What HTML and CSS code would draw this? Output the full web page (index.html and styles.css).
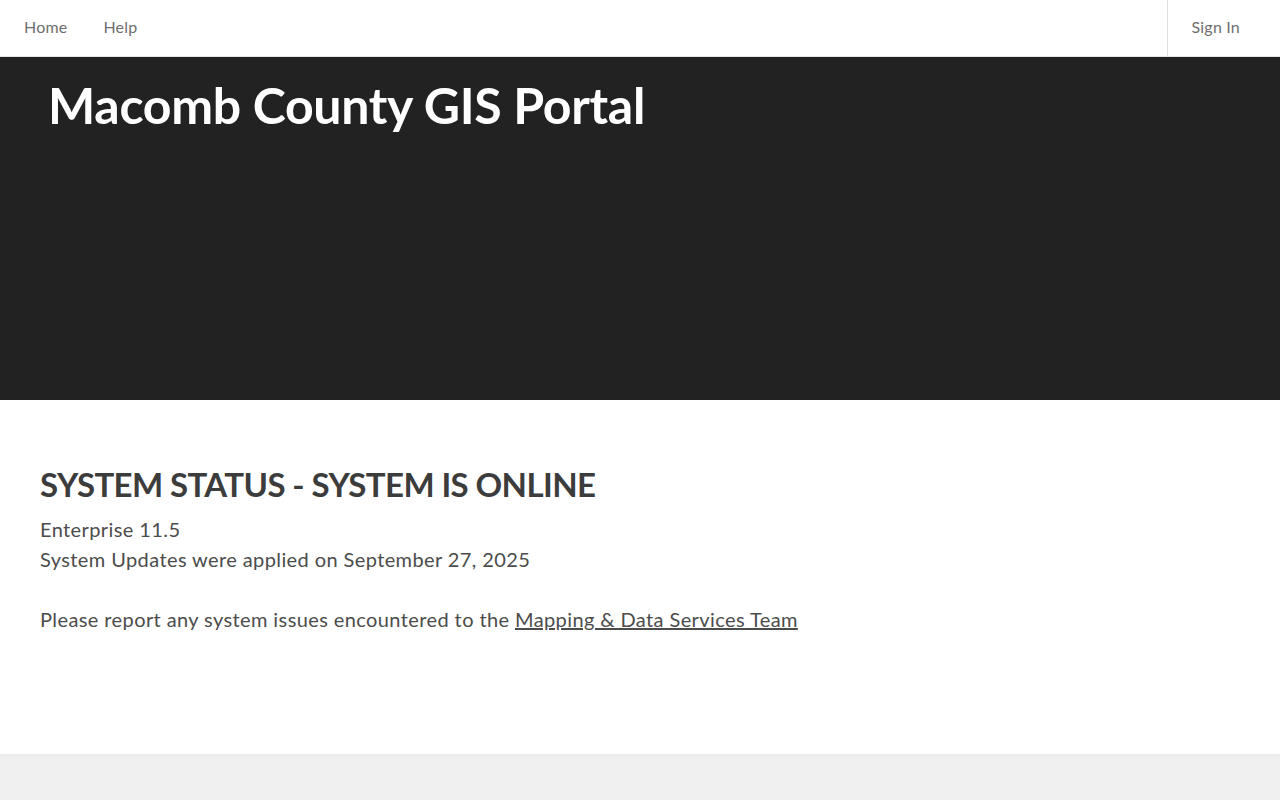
FILE: index.html
```html
<!DOCTYPE html>
<html lang="en">
<head>
    <meta charset="UTF-8">
    <meta name="viewport" content="width=device-width, initial-scale=1.0">
    <title>Macomb County GIS Portal</title>
    <link rel="stylesheet" href="styles.css">
</head>
<body>

    <!-- Top navigation -->
    <nav class="top-nav">
        <div class="nav-links">
            <a href="#">Home</a>
            <a href="#">Help</a>
        </div>
        <div class="nav-user">
            <a href="#">Sign In</a>
        </div>
    </nav>

    <!-- Banner -->
    <header class="banner">
        <h1>Macomb County GIS Portal</h1>
    </header>

    <!-- Status -->
    <main class="status">
        <h2>SYSTEM STATUS - SYSTEM IS ONLINE</h2>
        <p>Enterprise 11.5<br>
        System Updates were applied on September 27, 2025</p>
        <p>Please report any system issues encountered to the <a href="#">Mapping &amp; Data Services Team</a></p>
    </main>

    <footer class="footer"></footer>

</body>
</html>
```

FILE: styles.css
```css
body {
    font-family: Lato, "Open Sans", sans-serif;
    background-color: #f0f0f0;
    margin: 0;
    color: #4c4c4c;
}
.top-nav {
    display: flex;
    justify-content: space-between;
    height: 56px;
    background-color: #fff;
    border-bottom: 1px solid #e6e6e6;
}
.nav-links {
    display: flex;
    align-items: center;
    padding: 0 0 4px 24px;
    gap: 36px;
}
.top-nav a {
    color: #6e6e6e;
    text-decoration: none;
    font-size: 16px;
    letter-spacing: 0.2px;
}
.nav-user {
    display: flex;
    align-items: center;
    border-left: 1px solid #e0e0e0;
    padding: 0 40px 4px 24px;
}
.banner {
    background-color: #222;
    height: 343px;
    padding: 0 48px;
}
.banner h1 {
    margin: 0;
    padding-top: 20px;
    color: #fff;
    font-size: 50px;
    font-weight: 700;
    line-height: 56px;
    letter-spacing: -0.3px;
}
.status {
    background-color: #fff;
    padding: 64px 40px 120px;
}
.status h2 {
    margin: 0 0 10px;
    font-size: 33px;
    font-weight: 700;
    line-height: 40px;
    letter-spacing: -0.6px;
    color: #3c3c3c;
}
.status p {
    margin: 0 0 30px;
    font-size: 20px;
    line-height: 30px;
    letter-spacing: 0.4px;
}
.status p:last-child {
    margin-bottom: 0;
}
.status a {
    color: #4c4c4c;
    text-decoration: underline;
}
.footer {
    border-top: 3px solid #ececec;
    height: 60px;
}
```
